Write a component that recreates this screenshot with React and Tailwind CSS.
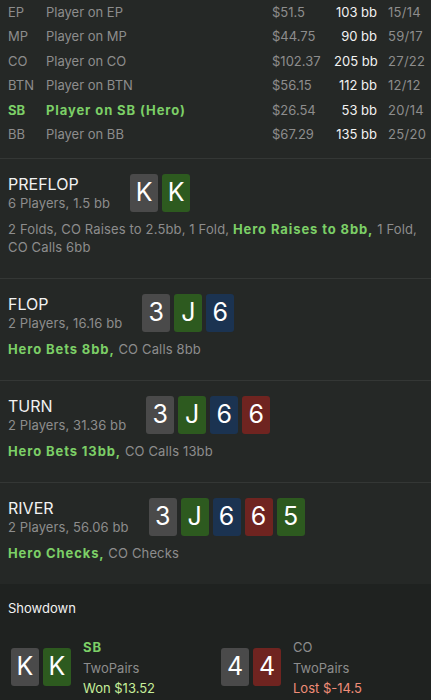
import React from "react";

const players = [
  { pos: "EP", name: "Player on EP", money: "$51.5", bb: "103 bb", stat: "15/14" },
  { pos: "MP", name: "Player on MP", money: "$44.75", bb: "90 bb", stat: "59/17" },
  { pos: "CO", name: "Player on CO", money: "$102.37", bb: "205 bb", stat: "27/22" },
  { pos: "BTN", name: "Player on BTN", money: "$56.15", bb: "112 bb", stat: "12/12" },
  { pos: "SB", name: "Player on SB (Hero)", money: "$26.54", bb: "53 bb", stat: "20/14", hero: true },
  { pos: "BB", name: "Player on BB", money: "$67.29", bb: "135 bb", stat: "25/20" },
];

const cardColors = {
  gray: "bg-[#4a4a4a]",
  green: "bg-[#2d5a1f]",
  blue: "bg-[#1b3351]",
  red: "bg-[#6f2420]",
};

function Card({ rank, color }) {
  return (
    <div
      className={`w-[28px] h-[38px] rounded-[3px] flex items-center justify-center text-[25px] text-white ${cardColors[color]}`}
    >
      {rank}
    </div>
  );
}

function Street({ title, sub, cards, children }) {
  return (
    <div className="border-t border-[#343735] pl-2 pr-2 pt-[15px] pb-[22px]">
      <div className="flex items-center">
        <div className="mr-5">
          <div className="text-[16px] leading-[20px] text-[#f2f2f2]">{title}</div>
          <div className="text-[13px] leading-[18px] text-[#8d8d8d] tracking-[0.1px]">{sub}</div>
        </div>
        <div className="flex gap-[4px]">
          {cards.map((c, i) => (
            <Card key={i} rank={c[0]} color={c[1]} />
          ))}
        </div>
      </div>
      <div className="mt-2 text-[13px] leading-[18px] text-[#8d8d8d] tracking-[0.15px]">{children}</div>
    </div>
  );
}

function Hero({ children }) {
  return <span className="font-bold text-[#7ccf67] tracking-[0.9px]">{children}</span>;
}

function ShowHand({ cards, pos, hand, result, won }) {
  return (
    <div className="w-[216px] flex items-center">
      <div className="flex gap-[4px]">
        {cards.map((c, i) => (
          <Card key={i} rank={c[0]} color={c[1]} />
        ))}
      </div>
      <div className="ml-3 text-[13px] leading-[20.5px] mt-[2px]">
        <div className={won ? "font-bold text-[#7ccf67] tracking-[0.9px]" : "text-[#8d8d8d]"}>{pos}</div>
        <div className="text-[#8d8d8d]">{hand}</div>
        <div className={won ? "text-[#c6ee9a]" : "text-[#ef8d78]"}>{result}</div>
      </div>
    </div>
  );
}

export default function App() {
  return (
    <div
      className="w-[431px] h-[700px] overflow-hidden bg-[#252826]"
      style={{ fontFamily: 'Inter, "Liberation Sans", Arial, sans-serif' }}
    >
      <div className="pb-[11px]">
        {players.map((p) => (
          <div key={p.pos} className="flex items-center h-[24.5px] pl-2 pr-[7px] text-[13px]">
            <div className={`w-[38px] ${p.hero ? "font-bold text-[#7ccf67]" : "text-[#8d8d8d]"}`}>{p.pos}</div>
            <div className={`flex-1 ${p.hero ? "font-bold text-[#7ccf67] tracking-[0.9px]" : "text-[#8d8d8d]"}`}>
              {p.name}
            </div>
            <div className="w-[62px] text-[#8d8d8d]">{p.money}</div>
            <div className="w-[43px] text-right text-[#f2f2f2] whitespace-nowrap">{p.bb}</div>
            <div className="ml-[11px] w-[36px] text-[#8d8d8d] whitespace-nowrap tracking-[0.3px]">{p.stat}</div>
          </div>
        ))}
      </div>

      <Street title="PREFLOP" sub="6 Players, 1.5 bb" cards={[["K", "gray"], ["K", "green"]]}>
        2 Folds, CO Raises to 2.5bb, 1 Fold, <Hero>Hero Raises to 8bb,</Hero> 1 Fold, CO Calls 6bb
      </Street>
      <Street title="FLOP" sub="2 Players, 16.16 bb" cards={[["3", "gray"], ["J", "green"], ["6", "blue"]]}>
        <Hero>Hero Bets 8bb,</Hero> CO Calls 8bb
      </Street>
      <Street
        title="TURN"
        sub="2 Players, 31.36 bb"
        cards={[["3", "gray"], ["J", "green"], ["6", "blue"], ["6", "red"]]}
      >
        <Hero>Hero Bets 13bb,</Hero> CO Calls 13bb
      </Street>
      <Street
        title="RIVER"
        sub="2 Players, 56.06 bb"
        cards={[["3", "gray"], ["J", "green"], ["6", "blue"], ["6", "red"], ["5", "green"]]}
      >
        <Hero>Hero Checks,</Hero> CO Checks
      </Street>

      <div className="bg-[#1f2220] h-full">
        <div className="pl-2 pt-[15px] text-[13px] leading-[18px] text-[#f2f2f2]">Showdown</div>
        <div className="flex pl-[11px] mt-[18px]">
          <ShowHand cards={[["K", "gray"], ["K", "green"]]} pos="SB" hand="TwoPairs" result="Won $13.52" won />
          <ShowHand cards={[["4", "gray"], ["4", "red"]]} pos="CO" hand="TwoPairs" result="Lost $-14.5" />
        </div>
      </div>
    </div>
  );
}
